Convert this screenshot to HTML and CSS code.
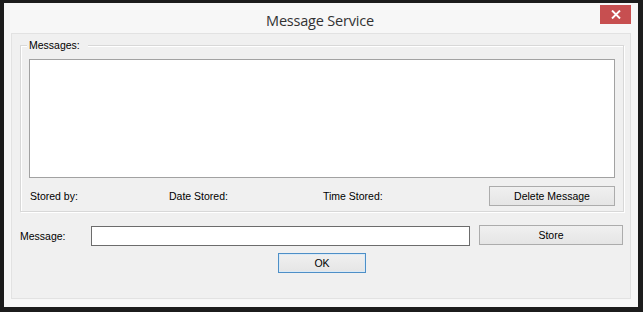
FILE: index.html
```html
<!DOCTYPE html>
<html>
<head>
<meta charset="utf-8">
<link rel="stylesheet" href="styles.css">
</head>
<body>
<div class="window">
  <div class="titlebar">
    <div class="title">Message Service</div>
    <div class="close"><svg width="10" height="9" viewBox="0 0 10 9"><path d="M1 0.5 L9 8.5 M9 0.5 L1 8.5" stroke="#ffffff" stroke-width="1.9" fill="none"/></svg></div>
  </div>
  <div class="client">
    <div class="group">
      <span class="legend">Messages:</span>
      <div class="listbox"></div>
      <div class="info-row">
        <span class="lbl lbl-by">Stored by:</span>
        <span class="lbl lbl-date">Date Stored:</span>
        <span class="lbl lbl-time">Time Stored:</span>
        <button class="btn btn-delete">Delete Message</button>
      </div>
    </div>
    <div class="msg-row">
      <span class="msg-lbl">Message:</span>
      <div class="textbox"></div>
      <button class="btn btn-store">Store</button>
    </div>
    <div class="ok-row">
      <button class="btn btn-ok">OK</button>
    </div>
  </div>
</div>
</body>
</html>
```
FILE: styles.css
```css
html, body {
  margin: 0;
  padding: 0;
}
body {
  background: #1c1c1c;
  width: 643px;
  height: 312px;
  overflow: hidden;
  font-family: "Liberation Sans", Arial, sans-serif;
  font-size: 10.5px;
  color: #000;
}
.window {
  margin: 3px 0 0 4px;
  width: 634px;
  height: 304px;
  box-sizing: border-box;
  background: #f7f7f7;
  padding: 0 7px 8px 7px;
  display: flex;
  flex-direction: column;
}
.titlebar {
  height: 30px;
  display: flex;
  position: relative;
  justify-content: center;
}
.title {
  font-family: "Open Sans", "Noto Sans", sans-serif;
  font-size: 14.5px;
  color: #333;
  line-height: 20px;
  padding-top: 8px;
  padding-right: 2px;
  letter-spacing: -0.2px;
}
.close {
  position: absolute;
  right: 0;
  top: 2px;
  width: 31px;
  height: 19px;
  background: #c74f50;
  display: flex;
  align-items: center;
  justify-content: center;
}
.client {
  flex: 1;
  border: 1px solid #e2e2e2;
  background: #f0f0f0;
  display: flex;
  flex-direction: column;
}
.group {
  margin: 11px 6px 0 8px;
  border: 1px solid #d8d8d8;
  box-shadow: 1px 1px 0 #ffffff, inset 1px 1px 0 #ffffff;
  display: flex;
  flex-direction: column;
  padding-bottom: 5px;
}
.legend {
  display: block;
  width: fit-content;
  margin: -7px 0 0 6px;
  padding: 0 8px 0 2px;
  background: #f0f0f0;
  line-height: 13px;
}
.listbox {
  margin: 7px 8px 0 8px;
  height: 119px;
  box-sizing: border-box;
  border: 1px solid #a2a2a2;
  background: #ffffff;
}
.info-row {
  margin-top: 8px;
  display: flex;
  align-items: center;
}
.lbl {
  line-height: 13px;
}
.lbl-by {
  margin-left: 9px;
  width: 139px;
}
.lbl-date {
  width: 154px;
}
.btn {
  font-family: "Liberation Sans", Arial, sans-serif;
  font-size: 10.5px;
  color: #000;
  box-sizing: border-box;
  height: 20px;
  border: 1px solid #acacac;
  background: linear-gradient(#f0f0f0, #e5e5e5);
  padding: 0;
  margin: 0;
  border-radius: 0;
  line-height: 17px;
}
.btn-delete {
  margin-left: auto;
  margin-right: 8px;
  width: 126px;
}
.msg-row {
  margin-top: 13px;
  display: flex;
  align-items: flex-start;
  padding-left: 8px;
}
.msg-lbl {
  width: 71px;
  line-height: 13px;
  margin-top: 5px;
}
.textbox {
  margin-top: 1px;
  width: 379px;
  height: 20px;
  box-sizing: border-box;
  border: 1px solid #6c6c6c;
  background: #ffffff;
}
.btn-store {
  margin-left: 9px;
  width: 144px;
}
.ok-row {
  margin-top: 7px;
  display: flex;
  padding-left: 266px;
}
.btn-ok {
  width: 88px;
  border-color: #4d8fc7;
  box-shadow: inset 0 0 0 1px #dbeaf6;
}
```
